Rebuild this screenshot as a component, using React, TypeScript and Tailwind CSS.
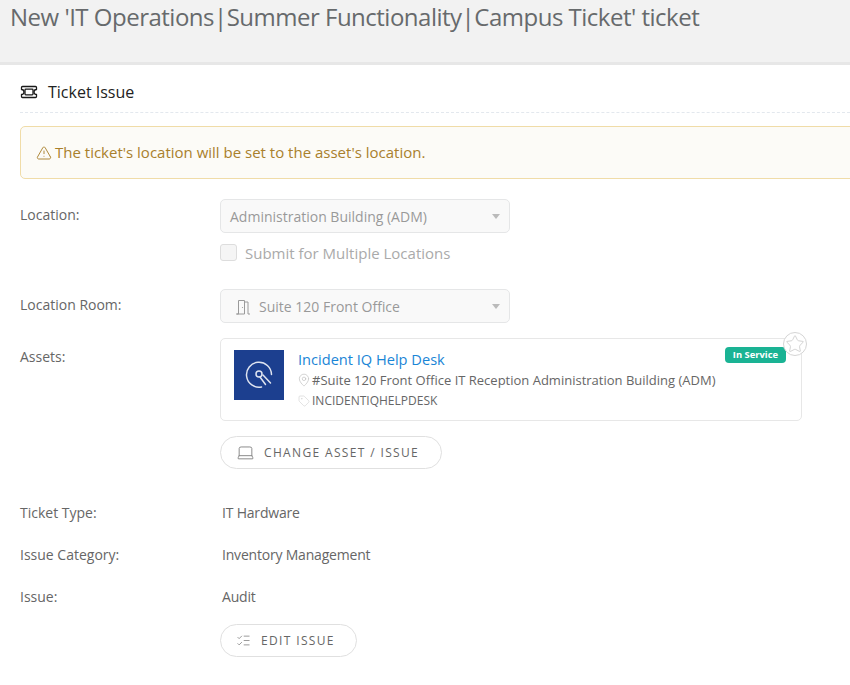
import { Laptop, ListChecks, MapPin, Star, Tag, TriangleAlert } from "lucide-react";

function Caret() {
  return <span className="ml-auto h-0 w-0 border-x-[4px] border-t-[5px] border-x-transparent border-t-[#bbbbbb]" />;
}

function TicketIcon() {
  return (
    <svg width="18" height="14" viewBox="0 0 18 14" fill="none" stroke="#1a1a1a" strokeWidth="1.3" strokeLinejoin="round">
      <path d="M2.5 1.5h13q1 0 1 1v2a2.5 2.5 0 0 0 0 5v2q0 1-1 1h-13q-1 0-1-1v-2a2.5 2.5 0 0 0 0-5v-2q0-1 1-1z" />
      <rect x="5" y="4.2" width="8" height="5.6" rx="0.8" />
    </svg>
  );
}

function DoorIcon() {
  return (
    <svg width="16" height="16" viewBox="0 0 16 16" fill="none" stroke="#9a9a9a" strokeWidth="1" className="shrink-0">
      <path d="M1 15h2.5V1.5h6V15H2" />
      <path d="M9.5 3h3.5v12h2" />
      <circle cx="7.5" cy="8.5" r="0.6" fill="#9a9a9a" stroke="none" />
    </svg>
  );
}

function AssetLogo() {
  return (
    <div className="mt-[1px] flex h-[50px] w-[50px] shrink-0 items-center justify-center bg-[#1c3f8f]">
      <svg width="30" height="30" viewBox="0 0 30 30" fill="none" stroke="#dfe4f0" strokeWidth="1.5" strokeLinecap="round">
        <path d="M17.5 27A12.5 12.5 0 1 1 27.5 14.5" />
        <circle cx="15" cy="14" r="3" />
        <path d="M16 17l5.5 7.5M19 15l7.5 8" />
      </svg>
    </div>
  );
}

function DetailRow({ label, value }: { label: string; value: string }) {
  return (
    <div className="flex h-[42px] items-center text-sm">
      <div className="w-[202px] text-[#666666]">{label}</div>
      <div className="tracking-[-0.2px] text-[#666666]">{value}</div>
    </div>
  );
}

export default function App() {
  return (
    <div className="h-[685px] w-[850px] overflow-hidden bg-white font-['Open_Sans',sans-serif]">
      {/* Header */}
      <div className="h-[65px] border-b-[3px] border-[#e7e7e7] bg-[#f2f2f2] pl-[10px]">
        <h1 className="text-[24px] leading-[34px] tracking-[-0.5px] text-[#676a6c]">
          New 'IT Operations|Summer Functionality|Campus Ticket' ticket
        </h1>
      </div>

      <div className="pl-5">
        {/* Section title */}
        <div className="flex h-[48px] items-center gap-[10px] border-b border-dashed border-[#e3e8ee] pt-[7px]">
          <TicketIcon />
          <span className="text-base text-[#222222]">Ticket Issue</span>
        </div>

        {/* Alert */}
        <div className="mt-[13px] flex h-[53px] w-[860px] items-center gap-[3px] rounded-[5px] border border-[#f0dca8] bg-[#fcfbf7] pl-[15px] text-[15px] text-[#a9802c]">
          <TriangleAlert size={16} strokeWidth={1.4} />
          <span>The ticket's location will be set to the asset's location.</span>
        </div>

        {/* Location */}
        <div className="mt-[20px] flex">
          <div className="w-[200px] pt-[6px] text-sm text-[#666666]">Location:</div>
          <div>
            <div className="flex h-[34px] w-[290px] items-center rounded-[5px] border border-[#e5e6e7] bg-[#f9f9f9] px-[9px] pt-[1px] text-sm text-[#999999]">
              Administration Building (ADM)
              <Caret />
            </div>
            <label className="mt-[10px] flex h-[20px] items-center gap-[8px] text-[15px] text-[#aaaaaa]">
              <span className="h-[17px] w-[17px] -translate-y-[1px] rounded-[3px] border border-[#dddddd] bg-[#f5f5f5]" />
              Submit for Multiple Locations
            </label>
          </div>
        </div>

        {/* Location Room */}
        <div className="mt-[26px] flex">
          <div className="w-[200px] pt-[6px] text-sm text-[#666666]">Location Room:</div>
          <div className="flex h-[34px] w-[290px] items-center gap-[8px] rounded-[5px] border border-[#e5e6e7] bg-[#f9f9f9] pl-[14px] pr-[9px] pt-[1px] text-sm text-[#999999]">
            <DoorIcon />
            Suite 120 Front Office
            <Caret />
          </div>
        </div>

        {/* Assets */}
        <div className="mt-[15px] flex">
          <div className="w-[200px] pt-[9px] text-sm text-[#666666]">Assets:</div>
          <div>
            <div className="relative h-[83px] w-[582px] rounded-[5px] border border-[#e7e7e7] pl-[13px] pt-[10px]">
              <div className="flex gap-[14px]">
                <AssetLogo />
                <div>
                  <div className="text-[14.6px] leading-[21px] text-[#1a85d6]">Incident IQ Help Desk</div>
                  <div className="flex items-center gap-[1px] text-[13px] leading-[20px] text-[#666666]">
                    <MapPin size={14} strokeWidth={1.1} className="-ml-[1px] text-[#bbbbbb]" />
                    #Suite 120 Front Office IT Reception Administration Building (ADM)
                  </div>
                  <div className="mt-[1px] flex items-center gap-[2px] text-xs leading-[20px] text-[#666666]">
                    <Tag size={12} strokeWidth={1.1} className="text-[#cccccc]" />
                    INCIDENTIQHELPDESK
                  </div>
                </div>
              </div>
              <span className="absolute right-[15px] top-[8px] rounded-[4px] bg-[#1ab394] px-[8px] text-[9.4px] font-bold leading-[16px] text-white">
                In Service
              </span>
              <span className="absolute right-[-6px] top-[-7px] flex h-[24px] w-[24px] items-center justify-center rounded-full border border-[#d5d5d5] bg-white">
                <Star size={20} strokeWidth={1.1} className="text-[#cfcfcf]" />
              </span>
            </div>
            <button className="mt-[15px] flex h-[33px] w-[222px] items-center gap-[9px] rounded-full border border-[#e0e0e0] bg-white pl-[15px] text-xs tracking-[1.35px] text-[#666666]">
              <Laptop size={19} strokeWidth={1.1} className="text-[#7a7a7a]" />
              CHANGE ASSET / ISSUE
            </button>
          </div>
        </div>

        {/* Issue details */}
        <div className="mt-[23px]">
          <DetailRow label="Ticket Type:" value="IT Hardware" />
          <DetailRow label="Issue Category:" value="Inventory Management" />
          <DetailRow label="Issue:" value="Audit" />
        </div>
        <div className="pl-[200px]">
          <button className="mt-[6px] flex h-[33px] w-[137px] items-center gap-[10px] rounded-full border border-[#e0e0e0] bg-white pl-[15px] text-xs tracking-[1.35px] text-[#666666]">
            <ListChecks size={15} strokeWidth={1.2} className="text-[#7a7a7a]" />
            EDIT ISSUE
          </button>
        </div>
      </div>
    </div>
  );
}
